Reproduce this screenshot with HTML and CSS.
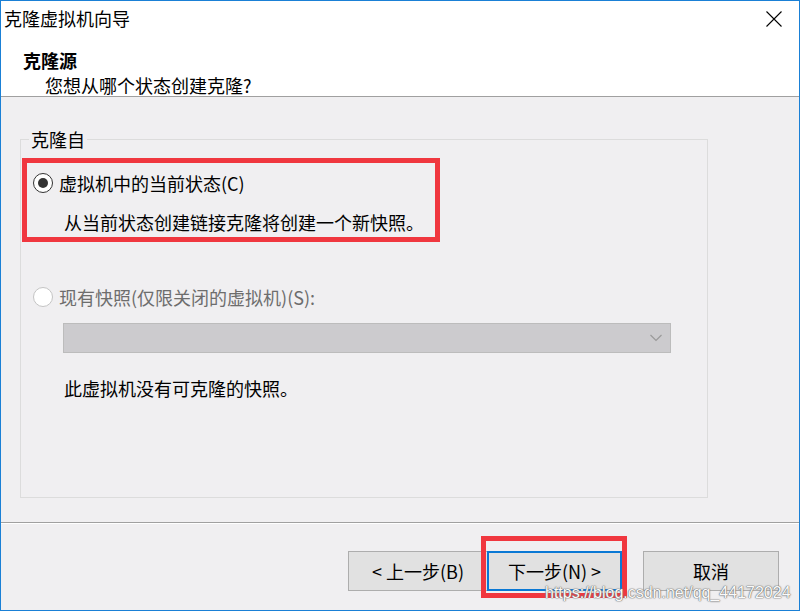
FILE: index.html
```html
<!DOCTYPE html>
<html lang="zh-CN">
<head>
<meta charset="utf-8">
<title>克隆虚拟机向导</title>
<link rel="stylesheet" href="styles.css">
</head>
<body>
<div class="window">
  <div class="titlebar">
    <span class="title">克隆虚拟机向导</span>
    <svg class="close" width="16" height="16" viewBox="0 0 16 16"><path d="M0.5 0.5 L15.5 15.5 M15.5 0.5 L0.5 15.5" stroke="#000" stroke-width="1.1" fill="none"/></svg>
  </div>
  <div class="header">
    <div class="h-title">克隆源</div>
    <div class="h-sub">您想从哪个状态创建克隆?</div>
  </div>
  <div class="main">
    <fieldset class="group">
      <legend>克隆自</legend>
      <div class="highlight">
        <div class="opt">
          <span class="radio checked"></span>
          <span class="label">虚拟机中的当前状态(C)</span>
        </div>
        <div class="desc">从当前状态创建链接克隆将创建一个新快照。</div>
      </div>
      <div class="opt opt2 disabled">
        <span class="radio"></span>
        <span class="label">现有快照(仅限关闭的虚拟机)(S):</span>
      </div>
      <div class="select">
        <svg width="12" height="8" viewBox="0 0 12 8"><path d="M0.5 1 L6 6.5 L11.5 1" stroke="#9a9a9a" stroke-width="1.2" fill="none"/></svg>
      </div>
      <div class="note">此虚拟机没有可克隆的快照。</div>
    </fieldset>
  </div>
  <div class="footer">
    <button class="btn back">&lt; 上一步(B)</button>
    <div class="btn-hl"><button class="btn next">下一步(N) &gt;</button></div>
    <button class="btn cancel">取消</button>
  </div>
  <div class="watermark">https://blog.csdn.net/qq_44172024</div>
</div>
</body>
</html>
```

FILE: styles.css
```css
* { box-sizing: border-box; }
html, body { margin: 0; padding: 0; }
body {
  width: 800px;
  height: 611px;
  font-family: "Noto Sans CJK SC", "Noto Sans", sans-serif;
  font-size: 18px;
  color: #000;
  overflow: hidden;
}
.window {
  position: relative;
  width: 800px;
  height: 611px;
  border: 1px solid #1a80d6;
  background: #f0eff1;
  display: flex;
  flex-direction: column;
}
.titlebar {
  height: 35px;
  background: #fff;
  display: flex;
  align-items: center;
  justify-content: space-between;
  padding: 0 17px 0 3px;
}
.title { line-height: 35px; }
.close { display: block; margin-top: 1px; }
.header {
  height: 61px;
  background: #fff;
  border-bottom: 1px solid #a0a0a0;
  padding: 12px 0 0 22px;
}
.h-title {
  font-weight: bold;
  line-height: 24px;
}
.h-sub {
  margin: 2px 0 0 22px;
  line-height: 22px;
}
.main {
  flex: 1;
  display: flex;
  flex-direction: column;
  padding: 31px 91px 24px 19px;
}
.group {
  flex: 1;
  margin: 0;
  padding: 0;
  border: 1px solid #dcdcdc;
  min-width: 0;
}
.group legend {
  margin-left: 8px;
  padding: 0 2px;
  line-height: 22px;
}
.highlight {
  margin: 8px 0 0 1px;
  width: 418px;
  border: 5px solid #f0373f;
  padding: 7px 0 2px 6px;
}
.opt {
  display: flex;
  align-items: center;
  height: 26px;
}
.radio {
  width: 20px;
  height: 20px;
  border-radius: 50%;
  border: 1px solid #333;
  background: #fff;
  display: flex;
  align-items: center;
  justify-content: center;
  flex: none;
}
.radio.checked::after {
  content: "";
  width: 10px;
  height: 10px;
  border-radius: 50%;
  background: #333;
}
.label { margin-left: 6px; line-height: 26px; }
.desc {
  margin: 13px 0 0 31px;
  line-height: 26px;
}
.opt2 {
  margin: 42px 0 0 12px;
}
.disabled { color: #6d6d6d; }
.disabled .radio { border-color: #c4c4c4; }
.select {
  margin: 13px 0 0 42px;
  width: 608px;
  height: 30px;
  background: #cccbce;
  border: 1px solid #bcbcbc;
  display: flex;
  align-items: center;
  justify-content: flex-end;
  padding-right: 8px;
}
.select svg { display: block; }
.note {
  margin: 22px 0 0 43px;
  line-height: 26px;
}
.footer {
  height: 88px;
  border-top: 1px solid #a0a0a0;
  box-shadow: inset 0 1px 0 #fff;
  display: flex;
  align-items: flex-start;
  padding: 13px 0 0 347px;
}
.btn {
  font-family: "Noto Sans CJK SC", "Noto Sans", sans-serif;
  font-size: 18px;
  color: #000;
  height: 40px;
  background: #e1e1e1;
  border: 1px solid #adadad;
  padding: 0;
  line-height: 36px;
}
.back { width: 140px; margin-top: 15px; }
.btn-hl {
  margin-left: -7px;
  border: 5px solid #f0373f;
  padding: 10px 0 2px 1px;
}
.next {
  width: 135px;
  border: 2px solid #0a78d4;
  display: block;
}
.cancel { width: 136px; margin: 15px 0 0 16px; }
.watermark {
  position: absolute;
  left: 544px;
  top: 582px;
  font-family: "Liberation Sans", Arial, sans-serif;
  font-size: 16px;
  line-height: 20px;
  color: #fafafa;
  text-shadow: 0 0 1px #666, 0 0 1px #666, 0 0 2px #999;
}
```
